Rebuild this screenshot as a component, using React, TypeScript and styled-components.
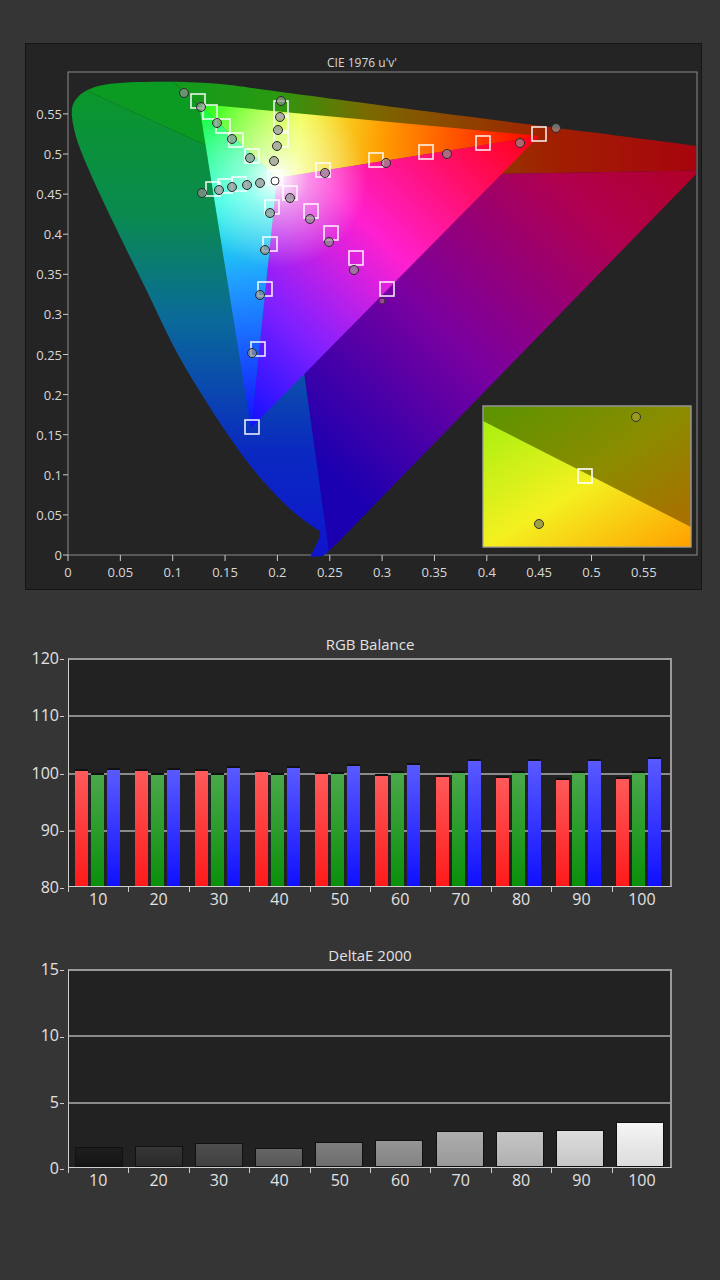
import React from 'react';
import styled, { createGlobalStyle } from 'styled-components';

const GlobalStyle = createGlobalStyle`
  html, body { margin: 0; padding: 0; background: #353535; }
  body { font-family: "Open Sans", "Liberation Sans", sans-serif; }
`;

const Page = styled.div`
  width: 720px;
  height: 1280px;
  background: #353535;
  display: flex;
  flex-direction: column;
  overflow: hidden;
`;

const CiePanel = styled.div`
  margin: 43px 0 0 25px;
  width: 677px;
  height: 547px;
  background: #242424;
  border: 1px solid #151515;
  box-sizing: border-box;
  svg { display: block; }
`;

const ChartBlock = styled.div<{ $top: number }>`
  margin-top: ${(p) => p.$top}px;
  display: flex;
  flex-direction: column;
  color: #e2e2e2;
`;

const ChartTitle = styled.div`
  width: 604px;
  margin-left: 68px;
  text-align: center;
  font-size: 15px;
  line-height: 20px;
  height: 20px;
  margin-bottom: 4px;
`;

const ChartRow = styled.div`
  display: flex;
`;

const YAxis = styled.div<{ $h: number }>`
  width: 68px;
  height: ${(p) => p.$h}px;
  position: relative;
`;

const YLabel = styled.span`
  position: absolute;
  right: 4px;
  transform: translateY(-50%);
  font-size: 16px;
  line-height: 16px;
  &::after {
    content: '';
    display: inline-block;
    width: 4px;
    height: 1px;
    background: #ccc;
    vertical-align: middle;
    margin-left: 1px;
  }
`;

const Plot = styled.div<{ $h: number }>`
  position: relative;
  width: 604px;
  height: ${(p) => p.$h}px;
  background: #222;
  border-top: 2px solid #9a9a9a;
  border-right: 2px solid #9a9a9a;
  border-left: 1px solid #cfcfcf;
  border-bottom: 1px solid #cfcfcf;
  box-sizing: border-box;
  display: flex;
  align-items: flex-end;
`;

const GridLine = styled.div`
  position: absolute;
  left: 0;
  right: 0;
  height: 2px;
  background: #8a8a8a;
`;

const Group = styled.div`
  position: relative;
  flex: 1;
  height: 100%;
  display: flex;
  align-items: flex-end;
  gap: 3px;
  padding-left: 6px;
  box-sizing: border-box;
`;

const barColors: Record<string, string> = {
  r: 'linear-gradient(#ff5a5a, #ff1a1a)',
  g: 'linear-gradient(#4aa84a, #0a900a)',
  b: 'linear-gradient(#5a5aff, #1010ff)',
};

const RgbBar = styled.div<{ $c: 'r' | 'g' | 'b' }>`
  width: 13px;
  background: ${(p) => barColors[p.$c]};
  border-top: 2px solid #111;
  box-sizing: border-box;
`;

const DeltaBar = styled.div<{ $shade: number }>`
  width: 48px;
  box-sizing: border-box;
  border: 1px solid #111;
  background: ${(p) => {
    const a = Math.round(30 + p.$shade * 215);
    const b = Math.round(20 + p.$shade * 200);
    return `linear-gradient(rgb(${a},${a},${a}), rgb(${b},${b},${b}))`;
  }};
`;

const XAxis = styled.div`
  margin-left: 68px;
  width: 604px;
  display: flex;
`;

const XLabel = styled.div`
  flex: 1;
  text-align: center;
  font-size: 16px;
  line-height: 24px;
  position: relative;
  &::before {
    content: '';
    position: absolute;
    left: 0;
    top: 0;
    width: 1px;
    height: 5px;
    background: #ccc;
  }
`;

const labels = [10, 20, 30, 40, 50, 60, 70, 80, 90, 100];
const rgbData = [
  [100.5, 99.8, 100.7],
  [100.5, 99.8, 100.7],
  [100.5, 99.8, 100.9],
  [100.2, 99.8, 100.9],
  [99.9, 99.9, 101.3],
  [99.6, 100.1, 101.5],
  [99.4, 100.1, 102.1],
  [99.2, 100.1, 102.1],
  [98.8, 100.1, 102.1],
  [99.1, 100.1, 102.6],
];
const deltaData = [1.5, 1.6, 1.8, 1.4, 1.9, 2.0, 2.7, 2.7, 2.8, 3.4];

const px = (u: number, v: number) => [68 + u * 1047, 555 - v * 802];
const P = (u: number, v: number) => px(u, v).join(',');
// the spectral locus, smoothed with cubic curves through the points
const locus: [number, number][] = [
  [0.6, 0.475], [0.258, 0.016], [0.24, 0.03], [0.21, 0.06], [0.175, 0.11], [0.14, 0.175],
  [0.105, 0.25], [0.075, 0.33], [0.045, 0.41], [0.02, 0.48], [0.006, 0.53], [0.006, 0.565],
  [0.03, 0.585], [0.08, 0.59], [0.14, 0.588], [0.2, 0.578], [0.35, 0.552], [0.5, 0.527],
  [0.6, 0.51],
];
function smoothPath(pts: [number, number][]) {
  const p = pts.map(([u, v]) => px(u, v));
  let d = `M${p[0][0]},${p[0][1]} L${p[1][0]},${p[1][1]}`;
  for (let i = 1; i < p.length - 1; i++) {
    const p0 = p[i - 1];
    const p1 = p[i];
    const p2 = p[i + 1];
    const p3 = p[i + 2] || p2;
    const c1 = [p1[0] + (p2[0] - p0[0]) / 6, p1[1] + (p2[1] - p0[1]) / 6];
    const c2 = [p2[0] - (p3[0] - p1[0]) / 6, p2[1] - (p3[1] - p1[1]) / 6];
    d += ` C${c1[0]},${c1[1]} ${c2[0]},${c2[1]} ${p2[0]},${p2[1]}`;
  }
  return d + ' Z';
}
const horseshoe = smoothPath(locus);
const W = '277,178';
const G = '199,104';
const R = '539,136';
const B = '251,428';

const squares = [
  [198, 101], [210, 112], [223, 126], [236, 140], [252, 156], [281, 108], [281, 124], [281, 140],
  [275, 178], [213, 189], [225, 186], [239, 184], [290, 193], [272, 207], [270, 244], [265, 289],
  [258, 349], [252, 427], [311, 211], [331, 233], [356, 258], [387, 289], [323, 170], [376, 160],
  [426, 152], [483, 143], [539, 134],
];
const circles = [
  [184, 93], [201, 107], [217, 123], [232, 139], [250, 158], [281, 101], [280, 117], [278, 130],
  [277, 146], [274, 161], [202, 193], [219, 190], [232, 187], [247, 185], [260, 183], [290, 198],
  [270, 213], [265, 250], [260, 295], [252, 353], [310, 219], [329, 242], [354, 270], [325, 173],
  [386, 163], [447, 154], [520, 143], [556, 128],
];

const ticks = [0, 0.05, 0.1, 0.15, 0.2, 0.25, 0.3, 0.35, 0.4, 0.45, 0.5, 0.55];

function CieChart() {
  return (
    <CiePanel>
      <svg width="675" height="545" viewBox="26 44 675 545" fontFamily='"Open Sans", "Liberation Sans", sans-serif'>
        <defs>
          <clipPath id="hs"><path d={horseshoe} /></clipPath>
          <linearGradient id="left" x1="0" y1="0" x2="0" y2="1">
            <stop offset="0" stopColor="#0b9a22" />
            <stop offset="0.3" stopColor="#0a8a50" />
            <stop offset="0.5" stopColor="#0a6a9a" />
            <stop offset="0.75" stopColor="#0a2ac0" />
            <stop offset="1" stopColor="#1010d0" />
          </linearGradient>
          <linearGradient id="top" x1="0" y1="0" x2="1" y2="0">
            <stop offset="0" stopColor="#0b9a22" />
            <stop offset="0.22" stopColor="#2a9a10" />
            <stop offset="0.38" stopColor="#7a6a00" />
            <stop offset="0.7" stopColor="#a02000" />
            <stop offset="1" stopColor="#a80010" />
          </linearGradient>
          <linearGradient id="br" x1="0" y1="1" x2="1" y2="0">
            <stop offset="0.2" stopColor="#1a00b0" />
            <stop offset="0.5" stopColor="#7a00a0" />
            <stop offset="0.8" stopColor="#b00050" />
            <stop offset="1" stopColor="#b00020" />
          </linearGradient>
          <linearGradient id="gr" gradientUnits="userSpaceOnUse" x1="199" y1="104" x2="539" y2="136">
            <stop offset="0" stopColor="#20ff20" />
            <stop offset="0.3" stopColor="#f0ff40" />
            <stop offset="0.55" stopColor="#ff9a00" />
            <stop offset="1" stopColor="#ff0000" />
          </linearGradient>
          <linearGradient id="rb" gradientUnits="userSpaceOnUse" x1="539" y1="136" x2="251" y2="428">
            <stop offset="0" stopColor="#ff0010" />
            <stop offset="0.45" stopColor="#ff20d0" />
            <stop offset="0.75" stopColor="#8020ff" />
            <stop offset="1" stopColor="#1010ff" />
          </linearGradient>
          <linearGradient id="bg" gradientUnits="userSpaceOnUse" x1="251" y1="428" x2="199" y2="104">
            <stop offset="0" stopColor="#1010ff" />
            <stop offset="0.45" stopColor="#20a0ff" />
            <stop offset="0.7" stopColor="#20ffe0" />
            <stop offset="1" stopColor="#20ff30" />
          </linearGradient>
          <radialGradient id="white" gradientUnits="userSpaceOnUse" cx="277" cy="178" r="90">
            <stop offset="0" stopColor="#fff" stopOpacity="1" />
            <stop offset="0.35" stopColor="#fff" stopOpacity="0.5" />
            <stop offset="1" stopColor="#fff" stopOpacity="0" />
          </radialGradient>
          <linearGradient id="inLow" x1="0" y1="0" x2="1" y2="1">
            <stop offset="0" stopColor="#a8f010" />
            <stop offset="0.5" stopColor="#f4f020" />
            <stop offset="1" stopColor="#ffa000" />
          </linearGradient>
          <linearGradient id="inHigh" x1="0" y1="0" x2="1" y2="1">
            <stop offset="0" stopColor="#5a9400" />
            <stop offset="0.5" stopColor="#8c8c00" />
            <stop offset="1" stopColor="#b06800" />
          </linearGradient>
        </defs>
        <text x="362" y="67" fill="#d8d8d8" fontSize="12" textAnchor="middle">CIE 1976 u'v'</text>
        <rect x="68" y="72" width="629" height="483" fill="#242424" stroke="#8a8a8a" strokeWidth="1" />
        <g clipPath="url(#hs)">
          <polygon points={`${W} 20,60 20,580 ${P(0.255, 0)}`} fill="url(#left)" />
          <polygon points={`${W} 150,60 720,60 720,170`} fill="url(#top)" />
          <polygon points={`${W} 150,60 20,60`} fill="#0b9a22" />
          <polygon points={`${W} 720,170 ${P(0.255, -0.05)}`} fill="url(#br)" />
          <polygon points={`${W} ${G} ${R}`} fill="url(#gr)" />
          <polygon points={`${W} ${R} ${B}`} fill="url(#rb)" />
          <polygon points={`${W} ${B} ${G}`} fill="url(#bg)" />
          <polygon points={`${G} ${R} ${B}`} fill="url(#white)" />
        </g>
        {ticks.map((u) => (
          <g key={u}>
            <line x1={68 + u * 1047} x2={68 + u * 1047} y1="555" y2="561" stroke="#ccc" />
            <text x={68 + u * 1047} y="577" fill="#d8d8d8" fontSize="13" textAnchor="middle">{u}</text>
          </g>
        ))}
        {ticks.map((v) => (
          <g key={v}>
            <line x1="63" x2="68" y1={555 - v * 802} y2={555 - v * 802} stroke="#ccc" />
            <text x="62" y={560 - v * 802} fill="#d8d8d8" fontSize="13" textAnchor="end">{v}</text>
          </g>
        ))}
        {squares.map(([x, y], i) => (
          <rect key={i} x={x - 7} y={y - 7} width="14" height="14" fill="none" stroke="#fff" strokeOpacity="0.9" strokeWidth="1.6" />
        ))}
        {circles.map(([x, y], i) => (
          <circle key={i} cx={x} cy={y} r="4.5" fill="#909090" fillOpacity="0.7" stroke="#2a2a2a" strokeWidth="1" />
        ))}
        <circle cx="275" cy="181" r="4" fill="#fff" stroke="#333" />
        <circle cx="382" cy="301" r="3" fill="#a040a0" stroke="#333" />
        <rect x="483" y="406" width="208" height="141" fill="url(#inHigh)" stroke="#888" />
        <polygon points="483,421 691,527 691,547 483,547" fill="url(#inLow)" />
        <rect x="483" y="406" width="208" height="141" fill="none" stroke="#999" />
        <circle cx="636" cy="417" r="4.5" fill="#9a9a20" stroke="#333" />
        <circle cx="539" cy="524" r="4.5" fill="#a0a040" stroke="#333" />
        <rect x="578" y="469" width="14" height="14" fill="none" stroke="#fff" strokeWidth="1.6" />
      </svg>
    </CiePanel>
  );
}

function RgbChart() {
  const h = 229;
  const per = h / 40;
  return (
    <ChartBlock $top={44}>
      <ChartTitle>RGB Balance</ChartTitle>
      <ChartRow>
        <YAxis $h={h}>
          {[120, 110, 100, 90, 80].map((v) => (
            <YLabel key={v} style={{ top: (120 - v) * per }}>{v}</YLabel>
          ))}
        </YAxis>
        <Plot $h={h}>
          {[110, 100, 90].map((v) => (
            <GridLine key={v} style={{ top: (120 - v) * per - 2 }} />
          ))}
          {rgbData.map((vals, i) => (
            <Group key={i}>
              {(['r', 'g', 'b'] as const).map((c, j) => (
                <RgbBar key={c} $c={c} style={{ height: (vals[j] - 80) * per }} />
              ))}
            </Group>
          ))}
        </Plot>
      </ChartRow>
      <XAxis>
        {labels.map((l) => <XLabel key={l}>{l}</XLabel>)}
      </XAxis>
    </ChartBlock>
  );
}

function DeltaChart() {
  const h = 199;
  const per = h / 15;
  return (
    <ChartBlock $top={34}>
      <ChartTitle>DeltaE 2000</ChartTitle>
      <ChartRow>
        <YAxis $h={h}>
          {[15, 10, 5, 0].map((v) => (
            <YLabel key={v} style={{ top: (15 - v) * per }}>{v}</YLabel>
          ))}
        </YAxis>
        <Plot $h={h}>
          {[10, 5].map((v) => (
            <GridLine key={v} style={{ top: (15 - v) * per - 2 }} />
          ))}
          {deltaData.map((d, i) => (
            <Group key={i}>
              <DeltaBar $shade={i / 9} style={{ height: d * per }} />
            </Group>
          ))}
        </Plot>
      </ChartRow>
      <XAxis>
        {labels.map((l) => <XLabel key={l}>{l}</XLabel>)}
      </XAxis>
    </ChartBlock>
  );
}

export default function App() {
  return (
    <>
      <GlobalStyle />
      <Page>
        <CieChart />
        <RgbChart />
        <DeltaChart />
      </Page>
    </>
  );
}
